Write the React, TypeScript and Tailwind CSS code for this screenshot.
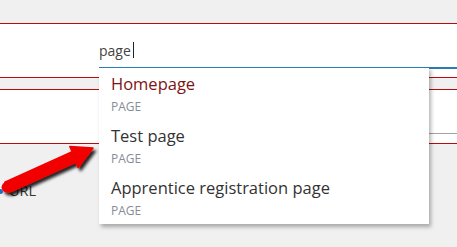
import React from 'react';

const items = [
  { title: 'Homepage', active: true },
  { title: 'Test page', active: false },
  { title: 'Apprentice registration page', active: false },
];

const Arrow = () => (
  <svg className="absolute left-0 top-0 pointer-events-none" width="120" height="220" viewBox="0 0 120 220">
    <defs>
      <filter id="arrowShadow" x="-20%" y="-20%" width="150%" height="150%">
        <feDropShadow dx="2.5" dy="3" stdDeviation="1.5" floodColor="#000" floodOpacity="0.85" />
      </filter>
    </defs>
    <g filter="url(#arrowShadow)">
      <polygon
        points="9.4,192.2 75.8,162.3 78.2,167.6 93,148 69.8,146.4 72.2,151.8 4.8,182.3"
        fill="#f20000"
        stroke="#f20000"
        strokeWidth="1.5"
        strokeLinejoin="round"
      />
      <circle cx="7" cy="187.2" r="5.4" fill="#f20000" />
    </g>
  </svg>
);

export default function App() {
  return (
    <div
      className="relative w-[457px] h-[247px] overflow-hidden bg-[#f0f0f0]"
      style={{ fontFamily: '"Open Sans", "Noto Sans", sans-serif' }}
    >
      <div className="h-[23px]" />

      {/* first field row */}
      <div className="flex border-y border-[#b80c0c] bg-white">
        <div className="w-[99px] shrink-0" />
        <div className="flex-1 pb-[8px]">
          <div className="pt-[16px] pb-[7px] border-b-2 border-[#2b7cb3]">
            <div className="flex items-center h-[20px] text-[14px] text-[#444]">
              <span>page</span>
              <span className="inline-block w-px h-[16px] bg-[#222] ml-[2px]" />
            </div>
          </div>
        </div>
      </div>

      {/* second field row */}
      <div className="mt-[11px] flex border-y border-[#b80c0c] bg-white">
        <div className="w-[99px] shrink-0" />
        <div className="flex-1 pb-[9px]">
          <div className="h-[44px] border-b border-[#a3a3a3]" />
        </div>
      </div>

      <div className="mt-[37px] flex items-center h-[20px]">
        <span className="w-[5px] h-[5px] rounded-full bg-[#2b6cc4] -ml-[2px]" />
        <span className="ml-[6px] text-[14.5px] leading-[20px] text-[#333]">URL</span>
      </div>

      {/* autocomplete dropdown */}
      <div className="absolute left-[99px] top-[67px] w-[330px] bg-white border-t border-[#2b7cb3] shadow-[2px_3px_4px_rgba(0,0,0,0.3)]">
        {items.map((item) => (
          <div key={item.title} className="px-[12px] pt-[5px] pb-[5px]">
            <div
              className={`text-[16.5px] leading-[22px] whitespace-nowrap ${item.active ? 'text-[#7e1414]' : 'text-[#333]'}`}
            >
              {item.title}
            </div>
            <div className="mt-[4px] text-[12px] leading-[16px] text-[#878d96]">PAGE</div>
          </div>
        ))}
      </div>

      <Arrow />
    </div>
  );
}
